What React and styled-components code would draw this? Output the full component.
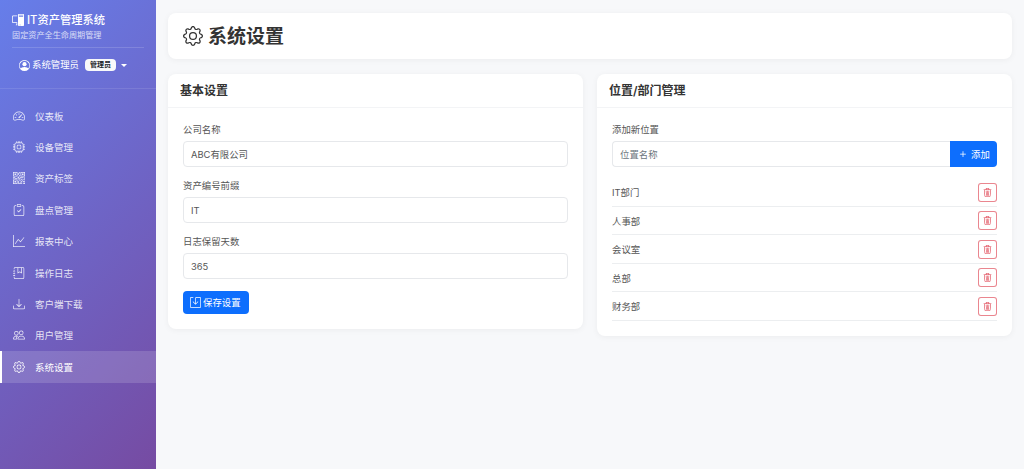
import React from "react";
import styled, { createGlobalStyle } from "styled-components";
import {
  BsPcDisplay,
  BsPersonCircle,
  BsSpeedometer2,
  BsCpu,
  BsQrCode,
  BsClipboardCheck,
  BsGraphUp,
  BsJournalBookmark,
  BsDownload,
  BsPeople,
  BsGear,
  BsSave,
  BsTrash3,
  BsPlus,
} from "react-icons/bs";

const fontStack = `"Inter", "Noto Sans CJK SC", sans-serif`;

const GlobalStyle = createGlobalStyle`
  html, body {
    margin: 0;
    height: 100%;
    background: #f7f8fa;
    font-family: ${fontStack};
    color: #212529;
  }
  * { box-sizing: border-box; }
`;

const Layout = styled.div`
  display: flex;
  width: 1024px;
  height: 469px;
  overflow: hidden;
`;

const Sidebar = styled.aside`
  width: 156px;
  flex-shrink: 0;
  background: linear-gradient(135deg, #667eea 0%, #764ba2 100%);
  color: #fff;
`;

const Brand = styled.div`
  padding: 13px 12px 0;
  height: 89px;
  border-bottom: 1px solid rgba(255, 255, 255, 0.1);
`;

const BrandTitle = styled.div`
  display: flex;
  align-items: center;
  gap: 3px;
  font-size: 11.25px;
  font-weight: 500;
  line-height: 14px;
`;

const BrandSub = styled.div`
  margin-top: 2px;
  font-size: 8.15px;
  line-height: 12px;
  opacity: 0.75;
`;

const UserRow = styled.div`
  margin-top: 6px;
  padding: 10px 0 0 7px;
  border-top: 1px solid rgba(255, 255, 255, 0.15);
  display: flex;
  align-items: center;
  gap: 2px;
  font-size: 9.4px;
  line-height: 14px;
`;

const RoleBadge = styled.span`
  margin-left: 4px;
  background: #f8f9fa;
  color: #212529;
  border-radius: 4px;
  font-size: 7px;
  font-weight: 600;
  line-height: 12px;
  padding: 0 5px;
`;

const Caret = styled.span`
  margin-left: 3px;
  border-top: 3px solid #fff;
  border-left: 3px solid transparent;
  border-right: 3px solid transparent;
`;

const Nav = styled.nav`
  padding-top: 11px;
`;

const NavItem = styled.div`
  display: flex;
  align-items: center;
  gap: 10px;
  height: 31.4px;
  padding-left: ${(p) => (p.$active ? "11px" : "13px")};
  font-size: 9.5px;
  color: ${(p) => (p.$active ? "#fff" : "rgba(255, 255, 255, 0.85)")};
  background: ${(p) => (p.$active ? "rgba(255, 255, 255, 0.15)" : "transparent")};
  border-left: ${(p) => (p.$active ? "2px solid #fff" : "none")};
  svg {
    width: 12px;
    height: 12px;
  }
`;

const Main = styled.main`
  flex: 1;
  padding: 13px 12px;
  display: flex;
  flex-direction: column;
  gap: 15px;
`;

const Card = styled.section`
  background: #fff;
  border-radius: 8px;
  box-shadow: 0 1px 6px rgba(0, 0, 0, 0.05);
`;

const PageHeader = styled(Card)`
  height: 46px;
  display: flex;
  align-items: center;
  gap: 5px;
  padding-left: 15px;
`;

const PageTitle = styled.h1`
  margin: 0;
  padding-bottom: 3px;
  font-size: 19px;
  font-weight: 700;
  color: #333;
`;

const Columns = styled.div`
  display: grid;
  grid-template-columns: 415px 415px;
  gap: 14px;
  align-items: start;
`;

const CardHeader = styled.div`
  height: 34px;
  padding: 0 12px 2px;
  display: flex;
  align-items: center;
  border-bottom: 1px solid #f3f4f6;
  font-size: 12px;
  font-weight: 600;
  color: #333;
`;

const CardBody = styled.div`
  padding: 15px;
`;

const Field = styled.div`
  margin-bottom: 12px;
`;

const Label = styled.label`
  display: block;
  font-size: 9.4px;
  line-height: 14px;
  color: #555;
  margin-bottom: 4px;
`;

const Input = styled.input`
  display: block;
  width: 100%;
  height: 26px;
  padding: 0 7px;
  border: 1px solid #e6e8eb;
  border-radius: 4px;
  font-family: ${fontStack};
  font-size: 9.4px;
  color: #555;
  background: #fff;
  outline: none;
  &::placeholder {
    color: #6c757d;
  }
`;

const SaveButton = styled.button`
  display: flex;
  align-items: center;
  gap: 2px;
  height: 23px;
  margin-top: 1px;
  padding: 0 8px 1px 7px;
  border: none;
  border-radius: 4px;
  background: #0d6efd;
  color: #fff;
  font-family: ${fontStack};
  font-size: 9.4px;
`;

const InputGroup = styled.div`
  display: flex;
  margin-bottom: 11px;
  ${Input} {
    flex: 1;
    border-right: none;
    border-radius: 4px 0 0 4px;
  }
`;

const AddButton = styled.button`
  display: flex;
  align-items: center;
  justify-content: center;
  gap: 2px;
  width: 47px;
  height: 26px;
  padding: 0 0 1px;
  border: none;
  border-radius: 0 4px 4px 0;
  background: #0d6efd;
  color: #fff;
  font-family: ${fontStack};
  font-size: 9.4px;
`;

const LocationRow = styled.div`
  display: flex;
  align-items: center;
  justify-content: space-between;
  height: 28.5px;
  padding-top: 1px;
  font-size: 9.4px;
  color: #555;
  border-bottom: 1px solid #eceef0;
`;

const DeleteButton = styled.button`
  display: flex;
  align-items: center;
  justify-content: center;
  width: 19px;
  height: 19px;
  padding: 0;
  background: #fff;
  border: 1px solid rgba(220, 53, 69, 0.6);
  border-radius: 3px;
  color: #dc3545;
  svg {
    width: 9px;
    height: 9px;
  }
`;

const navItems = [
  { label: "仪表板", Icon: BsSpeedometer2 },
  { label: "设备管理", Icon: BsCpu },
  { label: "资产标签", Icon: BsQrCode },
  { label: "盘点管理", Icon: BsClipboardCheck },
  { label: "报表中心", Icon: BsGraphUp },
  { label: "操作日志", Icon: BsJournalBookmark },
  { label: "客户端下载", Icon: BsDownload },
  { label: "用户管理", Icon: BsPeople },
  { label: "系统设置", Icon: BsGear, active: true },
];

const fields = [
  { label: "公司名称", value: "ABC有限公司" },
  { label: "资产编号前缀", value: "IT" },
  { label: "日志保留天数", value: "365" },
];

const locations = ["IT部门", "人事部", "会议室", "总部", "财务部"];

const App = () => (
  <Layout>
    <GlobalStyle />
    <Sidebar>
      <Brand>
        <BrandTitle>
          <BsPcDisplay size={12} />
          IT资产管理系统
        </BrandTitle>
        <BrandSub>固定资产全生命周期管理</BrandSub>
        <UserRow>
          <BsPersonCircle size={11} />
          系统管理员
          <RoleBadge>管理员</RoleBadge>
          <Caret />
        </UserRow>
      </Brand>
      <Nav>
        {navItems.map(({ label, Icon, active }) => (
          <NavItem key={label} $active={active}>
            <Icon />
            {label}
          </NavItem>
        ))}
      </Nav>
    </Sidebar>
    <Main>
      <PageHeader>
        <BsGear size={20} color="#333" />
        <PageTitle>系统设置</PageTitle>
      </PageHeader>
      <Columns>
        <Card>
          <CardHeader>基本设置</CardHeader>
          <CardBody>
            {fields.map((f) => (
              <Field key={f.label}>
                <Label>{f.label}</Label>
                <Input defaultValue={f.value} />
              </Field>
            ))}
            <SaveButton>
              <BsSave size={11} />
              保存设置
            </SaveButton>
          </CardBody>
        </Card>
        <Card>
          <CardHeader>位置/部门管理</CardHeader>
          <CardBody>
            <Label>添加新位置</Label>
            <InputGroup>
              <Input placeholder="位置名称" />
              <AddButton>
                <BsPlus size={12} />
                添加
              </AddButton>
            </InputGroup>
            {locations.map((name) => (
              <LocationRow key={name}>
                {name}
                <DeleteButton aria-label="删除">
                  <BsTrash3 />
                </DeleteButton>
              </LocationRow>
            ))}
          </CardBody>
        </Card>
      </Columns>
    </Main>
  </Layout>
);

export default App;
